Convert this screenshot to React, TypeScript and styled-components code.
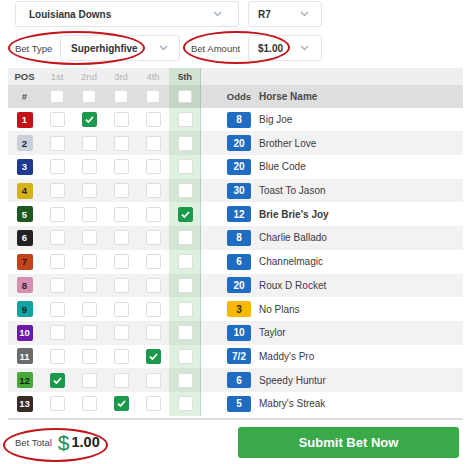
import React from "react";
import styled, { createGlobalStyle, css } from "styled-components";

const GlobalStyle = createGlobalStyle`
  html, body {
    margin: 0;
    padding: 0;
    background: #fff;
  }
  body {
    font-family: "Liberation Sans", Arial, sans-serif;
    color: #333;
  }
`;

const Page = styled.div`
  position: relative;
  width: 474px;
  height: 464px;
  padding-top: 1px;
  box-sizing: border-box;
  overflow: hidden;
`;

const ControlRow = styled.div<{ $top: number }>`
  display: flex;
  align-items: center;
  height: 26px;
  padding-left: 15px;
  margin-top: ${(p) => p.$top}px;
`;

const Select = styled.div<{ $width: number; $padL?: number; $padR?: number; $gap?: number }>`
  box-sizing: border-box;
  width: ${(p) => p.$width}px;
  height: 100%;
  margin-left: ${(p) => p.$gap || 0}px;
  display: flex;
  align-items: center;
  justify-content: space-between;
  padding: 0 ${(p) => p.$padR ?? 11}px 0 ${(p) => p.$padL ?? 10}px;
  border: 1px solid #e4e4e4;
  border-radius: 3px;
  background: #fff;
  font-size: 10px;
  font-weight: bold;
  color: #333;
`;

const Label = styled.span<{ $width: number; $gap?: number }>`
  width: ${(p) => p.$width}px;
  margin-left: ${(p) => p.$gap || 0}px;
  font-size: 9.5px;
  color: #444;
`;

const Chevron = () => (
  <svg width="9" height="6" viewBox="0 0 9 6">
    <polyline points="1,1 4.5,4.5 8,1" fill="none" stroke="#98a9b8" strokeWidth="1.2" />
  </svg>
);

const Ring = styled.div<{ $x: number; $y: number; $w: number; $h: number }>`
  position: absolute;
  left: ${(p) => p.$x}px;
  top: ${(p) => p.$y}px;
  width: ${(p) => p.$w}px;
  height: ${(p) => p.$h}px;
  box-sizing: border-box;
  border: 2px solid #c2161d;
  border-radius: 50%;
  pointer-events: none;
`;

const Table = styled.div`
  margin: 7px 11px 0 8px;
  padding-bottom: 2px;
  border-bottom: 2px solid #dddddd;
`;

const GridRow = styled.div<{ $bg: string; $h: number }>`
  display: grid;
  grid-template-columns: 33px repeat(5, 32px) 26px 24px 1fr;
  height: ${(p) => p.$h}px;
  background: ${(p) => p.$bg};
`;

const Cell = styled.div<{ $hl?: boolean; $left?: boolean }>`
  display: flex;
  align-items: center;
  justify-content: ${(p) => (p.$left ? "flex-start" : "center")};
  ${(p) =>
    p.$hl &&
    css`
      background: rgba(70, 175, 90, 0.18);
      box-shadow: inset -1px 0 0 rgba(110, 150, 120, 0.3);
    `}
`;

const HeadText = styled.span<{ $muted?: boolean }>`
  font-size: 9.5px;
  font-weight: ${(p) => (p.$muted ? "normal" : "bold")};
  color: ${(p) => (p.$muted ? "#b3b3b3" : "#4a4a4a")};
`;

const NameHead = styled(HeadText)`
  padding-left: 8px;
  font-size: 10px;
`;

const Box = styled.div<{ $checked?: boolean; $small?: boolean }>`
  box-sizing: border-box;
  width: ${(p) => (p.$small ? 14 : 15)}px;
  height: ${(p) => (p.$small ? 13 : 15)}px;
  border-radius: 2px;
  display: flex;
  align-items: center;
  justify-content: center;
  background: ${(p) => (p.$checked ? "#1c9a4c" : "#fff")};
  border: 1px solid ${(p) => (p.$checked ? "#1c9a4c" : "#dedede")};
`;

const Saddle = styled.div<{ $bg: string; $fg: string }>`
  width: 16px;
  height: 16px;
  border-radius: 2px;
  background: ${(p) => p.$bg};
  color: ${(p) => p.$fg};
  font-size: 9.5px;
  font-weight: bold;
  display: flex;
  align-items: center;
  justify-content: center;
`;

const Odds = styled.div<{ $bg: string; $fg: string }>`
  width: 24px;
  height: 16px;
  border-radius: 2px;
  background: ${(p) => p.$bg};
  color: ${(p) => p.$fg};
  font-size: 10px;
  font-weight: bold;
  display: flex;
  align-items: center;
  justify-content: center;
`;

const HorseName = styled.span<{ $bold?: boolean }>`
  padding-left: 8px;
  font-size: 10px;
  font-weight: ${(p) => (p.$bold ? "bold" : "normal")};
  color: #3a3a3a;
`;

const Footer = styled.div`
  display: flex;
  align-items: center;
  justify-content: space-between;
  height: 31px;
  margin-top: 7px;
  padding: 0 15px;
`;

const Total = styled.div`
  display: flex;
  align-items: center;
`;

const TotalLabel = styled.span`
  font-size: 9.5px;
  color: #444;
  margin-right: 6px;
`;

const Dollar = styled.span`
  font-size: 21px;
  color: #1f8f4c;
  margin-right: 2px;
  line-height: 1;
`;

const Amount = styled.span`
  font-size: 14.5px;
  font-weight: bold;
  color: #222;
`;

const SubmitButton = styled.button`
  width: 221px;
  height: 31px;
  border: none;
  border-radius: 3px;
  background: #3aa94a;
  color: #fff;
  font-family: "Liberation Sans", Arial, sans-serif;
  font-size: 13px;
  font-weight: bold;
`;

const Check = () => (
  <svg width="9" height="7" viewBox="0 0 9 7">
    <polyline points="1,3.6 3.4,6 8,1" fill="none" stroke="#fff" strokeWidth="1.8" />
  </svg>
);

type Horse = {
  num: number;
  bg: string;
  fg: string;
  name: string;
  odds: string;
  pick?: number;
  bold?: boolean;
  oddsBg?: string;
};

const horses: Horse[] = [
  { num: 1, bg: "#c4121b", fg: "#fff", name: "Big Joe", odds: "8", pick: 2 },
  { num: 2, bg: "#c8d0da", fg: "#222", name: "Brother Love", odds: "20" },
  { num: 3, bg: "#1f3891", fg: "#fff", name: "Blue Code", odds: "20" },
  { num: 4, bg: "#d3b21c", fg: "#222", name: "Toast To Jason", odds: "30" },
  { num: 5, bg: "#1d5a20", fg: "#fff", name: "Brie Brie's Joy", odds: "12", pick: 5, bold: true },
  { num: 6, bg: "#222222", fg: "#fff", name: "Charlie Ballado", odds: "8" },
  { num: 7, bg: "#c0431b", fg: "#2a1a10", name: "Channelmagic", odds: "6" },
  { num: 8, bg: "#d58fb1", fg: "#3a2030", name: "Roux D Rocket", odds: "20" },
  { num: 9, bg: "#14a3a3", fg: "#0f2a2a", name: "No Plans", odds: "3", oddsBg: "#f6b900" },
  { num: 10, bg: "#6a1aa6", fg: "#fff", name: "Taylor", odds: "10" },
  { num: 11, bg: "#6b6b6b", fg: "#fff", name: "Maddy's Pro", odds: "7/2", pick: 4 },
  { num: 12, bg: "#45a83a", fg: "#10260e", name: "Speedy Huntur", odds: "6", pick: 1 },
  { num: 13, bg: "#3a2a24", fg: "#fff", name: "Mabry's Streak", odds: "5", pick: 3 },
];

const places = ["1st", "2nd", "3rd", "4th", "5th"];

const App: React.FC = () => {
  const rows = horses.map((h, i) => (
    <GridRow key={h.num} $h={23.7} $bg={i % 2 === 1 ? "#f2f2f2" : "#fff"}>
      <Cell>
        <Saddle $bg={h.bg} $fg={h.fg}>
          {h.num}
        </Saddle>
      </Cell>
      {places.map((p, j) => (
        <Cell key={p} $hl={j === 4}>
          <Box $checked={h.pick === j + 1}>{h.pick === j + 1 && <Check />}</Box>
        </Cell>
      ))}
      <Cell />
      <Cell>
        <Odds $bg={h.oddsBg || "#1f6cc1"} $fg={h.oddsBg ? "#3a2a00" : "#fff"}>
          {h.odds}
        </Odds>
      </Cell>
      <Cell $left>
        <HorseName $bold={h.bold}>{h.name}</HorseName>
      </Cell>
    </GridRow>
  ));

  return (
    <Page>
      <GlobalStyle />
      <ControlRow $top={0}>
        <Select $width={224} $padL={13} $padR={16}>
          Louisiana Downs
          <Chevron />
        </Select>
        <Select $width={74} $gap={9} $padL={9} $padR={12}>
          R7
          <Chevron />
        </Select>
      </ControlRow>
      <ControlRow $top={8}>
        <Label $width={45}>Bet Type</Label>
        <Select $width={120} $padL={10} $padR={11}>
          Superhighfive
          <Chevron />
        </Select>
        <Label $width={57} $gap={11}>
          Bet Amount
        </Label>
        <Select $width={74} $padL={9} $padR={12}>
          $1.00
          <Chevron />
        </Select>
      </ControlRow>

      <Table>
        <GridRow $h={17} $bg="#efefef">
          <Cell>
            <HeadText>POS</HeadText>
          </Cell>
          {places.map((p, j) => (
            <Cell key={p} $hl={j === 4}>
              <HeadText $muted={j !== 4}>{p}</HeadText>
            </Cell>
          ))}
          <Cell />
          <Cell />
          <Cell />
        </GridRow>
        <GridRow $h={22.7} $bg="#dedede">
          <Cell>
            <HeadText>#</HeadText>
          </Cell>
          {places.map((p, j) => (
            <Cell key={p} $hl={j === 4}>
              <Box $small />
            </Cell>
          ))}
          <Cell />
          <Cell>
            <HeadText>Odds</HeadText>
          </Cell>
          <Cell $left>
            <NameHead>Horse Name</NameHead>
          </Cell>
        </GridRow>
        {rows}
      </Table>

      <Footer>
        <Total>
          <TotalLabel>Bet Total</TotalLabel>
          <Dollar>$</Dollar>
          <Amount>1.00</Amount>
        </Total>
        <SubmitButton>Submit Bet Now</SubmitButton>
      </Footer>

      <Ring $x={8} $y={31} $w={137} $h={34} />
      <Ring $x={183} $y={31} $w={107} $h={33} />
      <Ring $x={3} $y={428} $w={105} $h={34} />
    </Page>
  );
};

export default App;
